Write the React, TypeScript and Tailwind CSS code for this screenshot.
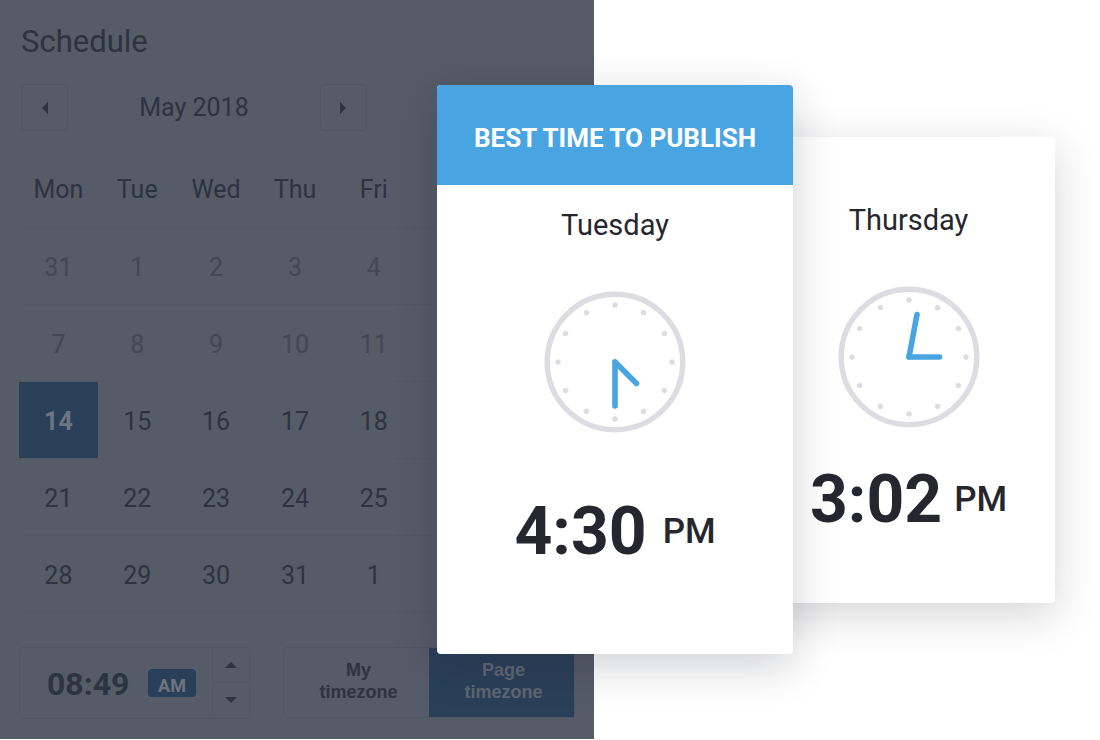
import { useState } from 'react';
import clsx from 'clsx';

interface TimeCardProps {
  day: string;
  time: string;
  period: string;
  hands: [number, number][];
  featured?: boolean;
}

const weekdays = ['Mon', 'Tue', 'Wed', 'Thu', 'Fri'];

const weeks = [
  [31, 1, 2, 3, 4],
  [7, 8, 9, 10, 11],
  [14, 15, 16, 17, 18],
  [21, 22, 23, 24, 25],
  [28, 29, 30, 31, 1]
];

const timezones = ['My timezone', 'Page timezone'];

function Triangle({ points, className }: { points: string; className: string }) {
  return (
    <svg viewBox="0 0 12 12" className={className} fill="currentColor" aria-hidden="true">
      <polygon points={points} />
    </svg>
  );
}

function Clock({ hands }: { hands: [number, number][] }) {
  return (
    <svg viewBox="-71 -71 142 142" className="block size-[142px]" aria-hidden="true">
      <circle r="67.8" fill="none" stroke="#dcdce2" strokeWidth="5.4" />
      {Array.from({ length: 12 }, (_, i) => (
        <circle key={i} cy="-57" r="2.7" fill="#dcdce2" transform={`rotate(${i * 30})`} />
      ))}
      {hands.map(([x, y]) => (
        <line
          key={`${x},${y}`}
          x2={x}
          y2={y}
          stroke="#48a5e2"
          strokeWidth="5.6"
          strokeLinecap="round"
        />
      ))}
    </svg>
  );
}

function TimeCard({ day, time, period, hands, featured }: TimeCardProps) {
  return (
    <article
      className={clsx(
        'relative flex shrink-0 flex-col items-center overflow-hidden rounded bg-white text-[#26272e]',
        featured
          ? 'z-20 mt-[85px] -ml-[157px] w-[356px] pb-[82px] shadow-[0_12px_44px_rgba(20,24,36,0.2)]'
          : 'z-10 mt-[137px] -ml-[31px] w-[293px] pt-[63px] pb-[63px] shadow-[0_12px_44px_rgba(20,24,36,0.18)]'
      )}
    >
      {featured && (
        <h2 className="mb-5 flex h-[100px] w-full items-center justify-center bg-[#48a5e2] pt-1.5 text-[26px] font-bold text-white">
          BEST TIME TO PUBLISH
        </h2>
      )}
      <h3 className="text-[29px] leading-10">{day}</h3>
      <div className="mt-[46px]">
        <Clock hands={hands} />
      </div>
      <p
        className={clsx(
          'flex items-center leading-[80px]',
          featured ? 'mt-[59px] gap-4' : 'mt-8 gap-3'
        )}
      >
        <span className="text-[66px] font-bold">{time}</span>
        <span className="text-[35px] font-medium">{period}</span>
      </p>
    </article>
  );
}

function SchedulePanel() {
  const [selected, setSelected] = useState('2-0');
  const [time, setTime] = useState('08:49');
  const [period, setPeriod] = useState('AM');
  const [timezone, setTimezone] = useState('Page timezone');

  const shiftTime = (minutes: number) => {
    const [h, m] = time.split(':').map(Number);
    const total = (((h * 60 + m + minutes) % 720) + 720) % 720;
    const hour = Math.floor(total / 60) || 12;
    setTime(`${String(hour).padStart(2, '0')}:${String(total % 60).padStart(2, '0')}`);
  };

  return (
    <section className="w-[54%] shrink-0 bg-[#555b67] px-[19px] pt-5 pb-5 text-[#2d3340]">
      <h1 className="pl-0.5 text-[31px] leading-[44px]">Schedule</h1>

      <div className="mt-5 ml-0.5 flex w-[346px] items-center justify-between">
        <button
          aria-label="Previous month"
          className="flex size-[47px] items-center justify-center rounded-sm border border-[#505662]"
        >
          <Triangle points="9,0 9,12 3,6" className="size-3" />
        </button>
        <span className="text-[25px]">May 2018</span>
        <button
          aria-label="Next month"
          className="flex size-[47px] items-center justify-center rounded-sm border border-[#505662]"
        >
          <Triangle points="3,0 3,12 9,6" className="size-3" />
        </button>
      </div>

      <div className="mt-5 pr-1">
        <table className="w-full table-fixed border-collapse text-[25px] leading-8">
          <thead>
            <tr className="h-[76px]">
              {weekdays.map((name) => (
                <th key={name} className="p-0 pt-0.5 font-normal">
                  {name}
                </th>
              ))}
              <td colSpan={2} />
            </tr>
          </thead>
          <tbody>
            {weeks.map((week, row) => (
              <tr key={row} className="border-y border-[#525864]">
                {week.map((date, col) => {
                  const id = `${row}-${col}`;
                  return (
                    <td key={id} className="p-0">
                      <button
                        onClick={() => setSelected(id)}
                        className={clsx(
                          'block h-[76px] w-full pt-1',
                          selected === id && 'bg-[#2a4059] font-bold text-[#6f7580]',
                          selected !== id && row < 2 && 'text-[#424854]'
                        )}
                      >
                        {date}
                      </button>
                    </td>
                  );
                })}
                <td colSpan={2} />
              </tr>
            ))}
          </tbody>
        </table>
      </div>

      <div className="mt-[34px] flex justify-between">
        <div className="flex h-[72px] w-[231px] rounded border border-[#505662]">
          <div className="flex flex-1 items-center justify-between pr-4 pl-[27px]">
            <input
              aria-label="Time"
              value={time}
              onChange={(e) => setTime(e.target.value)}
              className="w-[88px] bg-transparent pt-0.5 text-[32px] font-bold outline-none"
            />
            <button
              onClick={() => setPeriod(period === 'AM' ? 'PM' : 'AM')}
              className="h-7 w-12 rounded-sm bg-[#2a4059] pt-1.5 text-[18px] leading-[22px] font-bold text-[#6f7580]"
            >
              {period}
            </button>
          </div>
          <div className="flex w-[37px] flex-col border-l border-[#505662]">
            <button
              aria-label="Later"
              onClick={() => shiftTime(1)}
              className="flex flex-1 items-center justify-center border-b border-[#505662]"
            >
              <Triangle points="0,9 12,9 6,3" className="size-3" />
            </button>
            <button
              aria-label="Earlier"
              onClick={() => shiftTime(-1)}
              className="flex flex-1 items-center justify-center"
            >
              <Triangle points="0,3 12,3 6,9" className="size-3" />
            </button>
          </div>
        </div>

        <div className="flex h-[71px] w-[292px] rounded border border-[#505662]">
          {timezones.map((name) => (
            <button
              key={name}
              aria-pressed={timezone === name}
              onClick={() => setTimezone(name)}
              className={clsx(
                "flex-1 pr-6 pb-0.5 pl-7 font-['Liberation_Sans',sans-serif] text-[18px] leading-[22px] font-bold",
                timezone === name && 'bg-[#2a4059] text-[#5f6672]'
              )}
            >
              {name}
            </button>
          ))}
        </div>
      </div>
    </section>
  );
}

export default function App() {
  return (
    <main className="flex min-h-screen items-start overflow-hidden bg-white font-['Roboto',sans-serif]">
      <SchedulePanel />
      <TimeCard
        day="Tuesday"
        time="4:30"
        period="PM"
        hands={[[0, 44], [21.5, 21.5]]}
        featured
      />
      <TimeCard day="Thursday" time="3:02" period="PM" hands={[[8, -42.5], [30.5, 0]]} />
    </main>
  );
}
